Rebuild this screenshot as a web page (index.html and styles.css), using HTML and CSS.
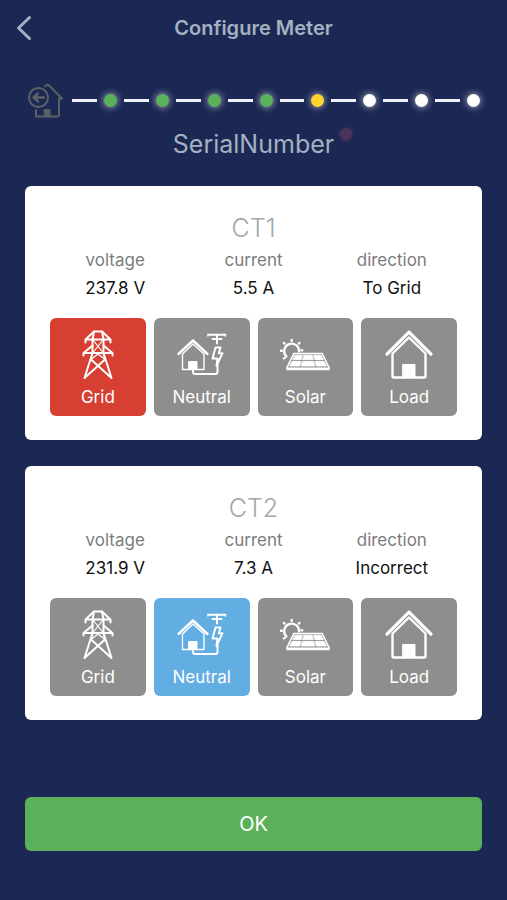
FILE: index.html
```
<!DOCTYPE html>
<html lang="en">
<head>
  <meta charset="UTF-8">
  <meta name="viewport" content="width=device-width, initial-scale=1.0">
  <title>Configure Meter</title>
  <link rel="stylesheet" href="styles.css">
</head>
<body>
  <!-- Icons shared by both cards -->
  <svg class="sprite" aria-hidden="true">
    <symbol id="icon-grid" viewBox="0 0 60 54">
      <g fill="none" stroke="currentColor" stroke-width="2" stroke-linejoin="round" stroke-linecap="round">
        <path d="M17.5 14.5V11.5L26 3.5H34L42.5 11.5V14.5M17.5 11.5H42.5"/>
        <path d="M15.5 27.5V25L24.5 17.5M44.5 27.5V25L35.5 17.5M15.5 25H44.5"/>
        <path d="M26 3.5L24.5 11.5V25L16.5 50L37 31.5L35.5 25M34 3.5L35.5 11.5V25L43.5 50L23 31.5L24.5 25"/>
        <path d="M25 12L35 24.5M35 12L25 24.5M23 31.5L30 26L37 31.5" stroke-width="1.2"/>
      </g>
    </symbol>
    <symbol id="icon-neutral" viewBox="0 0 60 54">
      <g fill="none" stroke="currentColor" stroke-width="2" stroke-linejoin="round" stroke-linecap="round">
        <path d="M6.5 26L21 12.5L35.5 26" stroke-width="2.4"/>
        <path d="M10.5 26V41.5H32V26L21 16Z" stroke-width="1.4"/>
        <path d="M17 33.5H25V41.5H17Z" fill="currentColor" stroke-width="1"/>
        <path d="M21 42V44Q21 46 23 46H43.5Q45.5 46 45.5 44V37"/>
        <path d="M36 6.8H53.5M40.5 11H49.5M45 6.8V15.5"/>
        <path d="M36 6.8V8.5M53.5 6.8V8.5" stroke-width="1"/>
        <path d="M43.5 19.5H48.5L46.8 25.2H50.5L44.5 38L45.5 30.5H40.5Z" stroke-width="2"/>
      </g>
    </symbol>
    <symbol id="icon-solar" viewBox="0 0 60 54">
      <g fill="none" stroke="currentColor" stroke-linejoin="round" stroke-linecap="round">
        <path d="M11.5 28.5A7.5 7.5 0 1 1 24.2 23.5" stroke-width="2.2"/>
        <path d="M16.7 12.8V12M9.6 15.6L8.9 14.9M6.8 22.7H6M9.6 29.8L8.9 30.5M23.8 15.6L24.5 14.9M26.6 22.2H27.2" stroke-width="2.4"/>
        <path d="M18.7 25.5H47.3L54 39.5V41.5H12V39.5Z" stroke-width="1.6"/>
        <path d="M12 40.3H54" stroke-width="1.6"/>
        <path d="M20 27.2H27.2L26.2 31.7H17.9ZM29 27.2H37L38.2 31.7H28ZM38.8 27.2H46.2L48.4 31.7H40ZM17.2 33.5H25.8L24.7 38H15ZM27.6 33.5H38.6L39.8 38H26.5ZM40.4 33.5H49.2L51.5 38H41.6Z" fill="currentColor" stroke-width="0.9"/>
      </g>
    </symbol>
    <symbol id="icon-load" viewBox="0 0 60 54">
      <g fill="none" stroke="currentColor" stroke-linejoin="round" stroke-linecap="round">
        <path d="M8 26.2L30 4.2L52 26.2" stroke-width="3.2"/>
        <path d="M13.5 25.5L30 9.5L46.5 25.5V48Q46.5 49.5 45 49.5H15Q13.5 49.5 13.5 48Z" stroke-width="2.4"/>
        <path d="M24 36.5H36V49.5H24Z" fill="currentColor" stroke-width="1"/>
      </g>
    </symbol>
  </svg>

  <header class="topbar">
    <button type="button" class="back" aria-label="Back">
      <svg width="16" height="26" viewBox="0 0 16 26" aria-hidden="true">
        <path d="M13.5 2.5L2.5 13L13.5 23.5" fill="none" stroke="currentColor" stroke-width="3" stroke-linecap="round" stroke-linejoin="round"/>
      </svg>
    </button>
    <h1 class="title">Configure Meter</h1>
  </header>

  <main class="content">
    <div class="progress">
      <svg class="home" width="36" height="36" viewBox="0 0 36 36" aria-hidden="true">
        <g fill="none" stroke="currentColor" stroke-width="2" stroke-linejoin="round" stroke-linecap="round">
          <circle cx="10.5" cy="15.5" r="9.5"/>
          <path d="M16 15.5H5.5M10 11.5L5.5 15.5L10 19.5" stroke-width="2.4"/>
          <path d="M17 4.5Q19 1.8 21 3.5L34 16.5H31V32Q31 34.5 29 34.5H8V28"/>
          <path d="M16.5 27.5H22V34.5H16.5Z" fill="currentColor" stroke-width="1"/>
        </g>
      </svg>
      <ol class="steps">
        <li class="step done"></li>
        <li class="step done"></li>
        <li class="step done"></li>
        <li class="step done"></li>
        <li class="step current" aria-current="step"></li>
        <li class="step"></li>
        <li class="step"></li>
        <li class="step"></li>
      </ol>
    </div>

    <h2 class="serial">SerialNumber<span class="status"></span></h2>

    <section class="card">
      <h3 class="card-title">CT1</h3>
      <dl class="readings">
        <div><dt>voltage</dt><dd>237.8 V</dd></div>
        <div><dt>current</dt><dd>5.5 A</dd></div>
        <div><dt>direction</dt><dd>To Grid</dd></div>
      </dl>
      <div class="options">
        <button type="button" class="option grid-on" aria-pressed="true"><svg class="icon"><use href="#icon-grid"/></svg>Grid</button>
        <button type="button" class="option" aria-pressed="false"><svg class="icon"><use href="#icon-neutral"/></svg>Neutral</button>
        <button type="button" class="option" aria-pressed="false"><svg class="icon"><use href="#icon-solar"/></svg>Solar</button>
        <button type="button" class="option" aria-pressed="false"><svg class="icon"><use href="#icon-load"/></svg>Load</button>
      </div>
    </section>

    <section class="card">
      <h3 class="card-title">CT2</h3>
      <dl class="readings">
        <div><dt>voltage</dt><dd>231.9 V</dd></div>
        <div><dt>current</dt><dd>7.3 A</dd></div>
        <div><dt>direction</dt><dd>Incorrect</dd></div>
      </dl>
      <div class="options">
        <button type="button" class="option" aria-pressed="false"><svg class="icon"><use href="#icon-grid"/></svg>Grid</button>
        <button type="button" class="option neutral-on" aria-pressed="true"><svg class="icon"><use href="#icon-neutral"/></svg>Neutral</button>
        <button type="button" class="option" aria-pressed="false"><svg class="icon"><use href="#icon-solar"/></svg>Solar</button>
        <button type="button" class="option" aria-pressed="false"><svg class="icon"><use href="#icon-load"/></svg>Load</button>
      </div>
    </section>

    <button type="button" class="ok">OK</button>
  </main>
</body>
</html>
```
FILE: styles.css
```
* {
  box-sizing: border-box;
}
body {
  margin: 0;
  min-height: 100vh;
  background: #1c2854;
  font-family: Inter, "Liberation Sans", sans-serif;
  font-size: 17px;
}
h1, h2, h3, dl, dd, ol {
  margin: 0;
  padding: 0;
}
button {
  border: none;
  padding: 0;
  font-family: inherit;
  cursor: pointer;
}
.sprite {
  position: absolute;
  width: 0;
  height: 0;
}
.topbar {
  display: grid;
  grid-template-columns: 16px 1fr 16px;
  align-items: center;
  height: 56px;
  padding: 0 16px;
  color: #a3b1c0;
}
.back {
  display: flex;
  background: none;
  color: inherit;
}
.title {
  font-size: 20px;
  line-height: 28px;
  font-weight: 600;
  text-align: center;
}
.content {
  padding: 26px 25px;
}
.progress {
  display: flex;
  align-items: center;
  gap: 8px;
  padding: 0 2px 0 3px;
}
.home {
  flex: none;
  color: #5d6064;
}
.steps {
  flex: 1;
  display: flex;
  gap: 7px;
  list-style: none;
}
.step {
  flex: 1;
  display: flex;
  align-items: center;
  gap: 7px;
}
.step::before {
  content: "";
  flex: 1;
  height: 3px;
  background: #f1effa;
}
.step::after {
  content: "";
  width: 13px;
  height: 13px;
  border-radius: 50%;
  background: #fff;
  box-shadow: 0 0 6px 1px rgba(255, 255, 255, 0.5);
}
.step.done::after {
  background: #5bb15a;
}
.step.current::after {
  background: #fdd52f;
}
.serial {
  position: relative;
  width: fit-content;
  margin: 8px auto 24px;
  font-size: 25px;
  line-height: 36px;
  font-weight: 400;
  color: #a3b1c0;
}
.status {
  position: absolute;
  top: 2px;
  right: -18px;
  width: 12px;
  height: 12px;
  border-radius: 50%;
  background: #4b3459;
  box-shadow: 0 0 4px #4b3459;
}
.card {
  margin-bottom: 26px;
  padding: 24px 25px;
  border-radius: 6px;
  background: #fff;
}
.card-title {
  font-size: 25px;
  line-height: 36px;
  font-weight: 300;
  text-align: center;
  color: #a3a8ac;
}
.readings {
  display: grid;
  grid-template-columns: repeat(3, 1fr);
  gap: 8px;
  margin-bottom: 16px;
  line-height: 28px;
  text-align: center;
}
.readings dt {
  color: #7c7c7c;
}
.readings dd {
  color: #111;
}
.options {
  display: grid;
  grid-template-columns: repeat(4, 1fr);
  gap: 8px;
}
.option {
  display: flex;
  flex-direction: column;
  align-items: center;
  gap: 3px;
  padding: 10px 0 7px;
  border-radius: 6px;
  background: #8e8e8e;
  color: #fff;
  font-size: 17px;
  line-height: 24px;
}
.option.grid-on {
  background: #d73f33;
}
.option.neutral-on {
  background: #62ade1;
}
.icon {
  width: 60px;
  height: 54px;
}
.ok {
  display: block;
  width: 100%;
  height: 54px;
  margin-top: 77px;
  border-radius: 6px;
  background: #5bb15a;
  color: #fff;
  font-size: 20px;
}
```
